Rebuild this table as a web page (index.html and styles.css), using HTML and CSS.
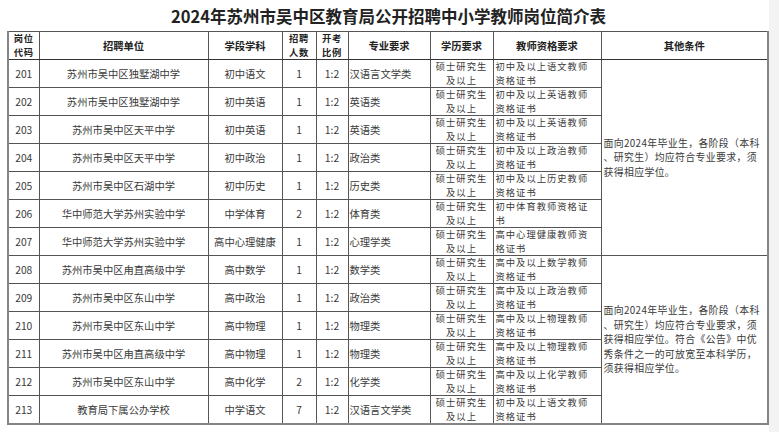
FILE: index.html
```html
<!DOCTYPE html>
<html lang="zh-CN">
<head>
<meta charset="utf-8">
<title>2024年苏州市吴中区教育局公开招聘中小学教师岗位简介表</title>
<link rel="stylesheet" href="styles.css">
</head>
<body>
<div class="page">
  <h1 class="title">2024年苏州市吴中区教育局公开招聘中小学教师岗位简介表</h1>
  <table class="jobs">
    <colgroup>
      <col class="c-code"><col class="c-unit"><col class="c-subj"><col class="c-num"><col class="c-ratio"><col class="c-major"><col class="c-edu"><col class="c-cert"><col class="c-other">
    </colgroup>
    <thead>
      <tr>
        <th class="two">岗位<br>代码</th>
        <th>招聘单位</th>
        <th>学段学科</th>
        <th class="two">招聘<br>人数</th>
        <th class="two">开考<br>比例</th>
        <th>专业要求</th>
        <th>学历要求</th>
        <th>教师资格要求</th>
        <th>其他条件</th>
      </tr>
    </thead>
    <tbody>
      <tr><td class="ctr">201</td><td class="ctr">苏州市吴中区独墅湖中学</td><td class="ctr">初中语文</td><td class="ctr">1</td><td class="ctr">1:2</td><td class="lft">汉语言文学类</td><td class="edu">硕士研究生<br>及以上</td><td class="cert">初中及以上语文教师<br>资格证书</td>
        <td class="other" rowspan="7">面向2024年毕业生，各阶段（本科<br>、研究生）均应符合专业要求，须<br>获得相应学位。</td></tr>
      <tr><td class="ctr">202</td><td class="ctr">苏州市吴中区独墅湖中学</td><td class="ctr">初中英语</td><td class="ctr">1</td><td class="ctr">1:2</td><td class="lft">英语类</td><td class="edu">硕士研究生<br>及以上</td><td class="cert">初中及以上英语教师<br>资格证书</td></tr>
      <tr><td class="ctr">203</td><td class="ctr">苏州市吴中区天平中学</td><td class="ctr">初中英语</td><td class="ctr">1</td><td class="ctr">1:2</td><td class="lft">英语类</td><td class="edu">硕士研究生<br>及以上</td><td class="cert">初中及以上英语教师<br>资格证书</td></tr>
      <tr><td class="ctr">204</td><td class="ctr">苏州市吴中区天平中学</td><td class="ctr">初中政治</td><td class="ctr">1</td><td class="ctr">1:2</td><td class="lft">政治类</td><td class="edu">硕士研究生<br>及以上</td><td class="cert">初中及以上政治教师<br>资格证书</td></tr>
      <tr><td class="ctr">205</td><td class="ctr">苏州市吴中区石湖中学</td><td class="ctr">初中历史</td><td class="ctr">1</td><td class="ctr">1:2</td><td class="lft">历史类</td><td class="edu">硕士研究生<br>及以上</td><td class="cert">初中及以上历史教师<br>资格证书</td></tr>
      <tr><td class="ctr">206</td><td class="ctr">华中师范大学苏州实验中学</td><td class="ctr">中学体育</td><td class="ctr">2</td><td class="ctr">1:2</td><td class="lft">体育类</td><td class="edu">硕士研究生<br>及以上</td><td class="cert">初中体育教师资格证<br>书</td></tr>
      <tr><td class="ctr">207</td><td class="ctr">华中师范大学苏州实验中学</td><td class="ctr">高中心理健康</td><td class="ctr">1</td><td class="ctr">1:2</td><td class="lft">心理学类</td><td class="edu">硕士研究生<br>及以上</td><td class="cert">高中心理健康教师资<br>格证书</td></tr>
      <tr><td class="ctr">208</td><td class="ctr">苏州市吴中区甪直高级中学</td><td class="ctr">高中数学</td><td class="ctr">1</td><td class="ctr">1:2</td><td class="lft">数学类</td><td class="edu">硕士研究生<br>及以上</td><td class="cert">高中及以上数学教师<br>资格证书</td>
        <td class="other" rowspan="6">面向2024年毕业生，各阶段（本科<br>、研究生）均应符合专业要求，须<br>获得相应学位。符合《公告》中优<br>秀条件之一的可放宽至本科学历，<br>须获得相应学位。</td></tr>
      <tr><td class="ctr">209</td><td class="ctr">苏州市吴中区东山中学</td><td class="ctr">高中政治</td><td class="ctr">1</td><td class="ctr">1:2</td><td class="lft">政治类</td><td class="edu">硕士研究生<br>及以上</td><td class="cert">高中及以上政治教师<br>资格证书</td></tr>
      <tr><td class="ctr">210</td><td class="ctr">苏州市吴中区东山中学</td><td class="ctr">高中物理</td><td class="ctr">1</td><td class="ctr">1:2</td><td class="lft">物理类</td><td class="edu">硕士研究生<br>及以上</td><td class="cert">高中及以上物理教师<br>资格证书</td></tr>
      <tr><td class="ctr">211</td><td class="ctr">苏州市吴中区甪直高级中学</td><td class="ctr">高中物理</td><td class="ctr">1</td><td class="ctr">1:2</td><td class="lft">物理类</td><td class="edu">硕士研究生<br>及以上</td><td class="cert">高中及以上物理教师<br>资格证书</td></tr>
      <tr><td class="ctr">212</td><td class="ctr">苏州市吴中区东山中学</td><td class="ctr">高中化学</td><td class="ctr">2</td><td class="ctr">1:2</td><td class="lft">化学类</td><td class="edu">硕士研究生<br>及以上</td><td class="cert">高中及以上化学教师<br>资格证书</td></tr>
      <tr><td class="ctr">213</td><td class="ctr">教育局下属公办学校</td><td class="ctr">中学语文</td><td class="ctr">7</td><td class="ctr">1:2</td><td class="lft">汉语言文学类</td><td class="edu">硕士研究生<br>及以上</td><td class="cert">初中及以上语文教师<br>资格证书</td></tr>
    </tbody>
  </table>
</div>
</body>
</html>
```
FILE: styles.css
```css
html {
  background: #f3f3f3;
}
body {
  margin: 0;
  font-family: "Noto Sans CJK SC", "Noto Sans", sans-serif;
  color: #3a3a3a;
}
.page {
  width: 762px;
  height: 432px;
  padding-left: 7px;
  background: #ffffff;
  overflow: hidden;
}
.title {
  margin: 0;
  height: 31px;
  padding-left: 1px;
  font-size: 16.5px;
  line-height: 33px;
  font-weight: 700;
  text-align: center;
  color: #222;
}
.jobs {
  width: 762px;
  table-layout: fixed;
  border-collapse: collapse;
  border: 2px solid #858585;
  border-top: 1px solid #555;
  font-size: 10.3px;
}
.c-code { width: 31px; }
.c-unit { width: 169px; }
.c-subj { width: 74px; }
.c-num { width: 34px; }
.c-ratio { width: 32px; }
.c-major { width: 82px; }
.c-edu { width: 63px; }
.c-cert { width: 108px; }
.c-other { width: 167px; }
.jobs tr {
  height: 28px;
}
.jobs th,
.jobs td {
  border: 1px solid #555;
  padding: 0;
  white-space: nowrap;
  overflow: hidden;
  vertical-align: middle;
}
.jobs th {
  font-weight: 700;
  color: #222;
  text-align: center;
  font-size: 10.3px;
  line-height: 14px;
}
.jobs th.two {
  font-size: 9.3px;
  line-height: 13.5px;
  letter-spacing: 0.8px;
}
.jobs thead th {
  border-bottom-color: #333;
}
.ctr {
  text-align: center;
}
.lft {
  text-align: left;
  padding-left: 1px !important;
}
.edu {
  text-align: center;
  font-size: 9.3px;
  line-height: 13.5px;
  letter-spacing: 1px;
}
.cert {
  text-align: left;
  padding-left: 2px !important;
  font-size: 9.3px;
  line-height: 13.5px;
  letter-spacing: 1px;
}
.other {
  text-align: left;
  padding-left: 2px !important;
  font-size: 9.9px;
  line-height: 14.4px;
  letter-spacing: 0.35px;
}
```
